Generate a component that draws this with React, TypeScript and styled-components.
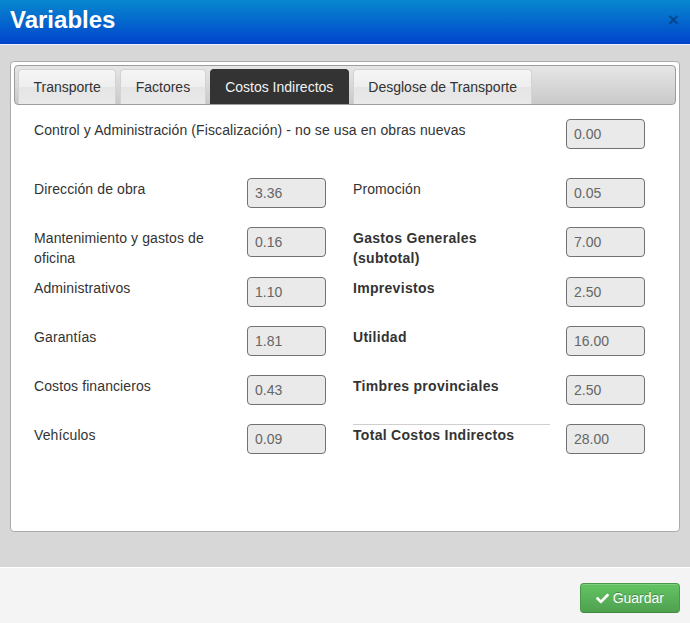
import React from 'react'
import styled, { createGlobalStyle } from 'styled-components'
import { FaCheck } from 'react-icons/fa'

const GlobalStyle = createGlobalStyle`
    html, body {
        margin: 0;
        padding: 0;
    }

    body {
        font-family: "Liberation Sans", Arial, sans-serif;
        font-size: 14px;
        color: #333;
        background: #fff;
    }

    * {
        box-sizing: border-box;
    }
`

const Modal = styled.div`
    display: flex;
    flex-direction: column;
    width: 690px;
    height: 623px;
    overflow: hidden;
`

const Header = styled.header`
    height: 45px;
    display: flex;
    align-items: center;
    justify-content: space-between;
    padding: 0 11px 4px 10px;
    background: linear-gradient(#0888cf, #0044cc);
    border-bottom: 1px solid #eef3fa;
`

const Title = styled.h3`
    margin: 0;
    font-size: 24px;
    line-height: 24px;
    font-weight: bold;
    color: #fff;
`

const Close = styled.button`
    border: 0;
    padding: 0;
    background: none;
    font-family: "Liberation Sans", Arial, sans-serif;
    font-size: 19px;
    font-weight: bold;
    line-height: 20px;
    color: #000;
    opacity: 0.3;
    cursor: pointer;
`

const Body = styled.div`
    flex: 1;
    display: flex;
    flex-direction: column;
    padding: 16px 10px 35px;
    background: #d7d7d7;
`

const Panel = styled.div`
    flex: 1;
    display: flex;
    flex-direction: column;
    padding: 3px;
    background: #fff;
    border: 1px solid #ababab;
    border-radius: 4px;
`

const TabBar = styled.ul`
    display: flex;
    gap: 4px;
    margin: 0;
    padding: 3px 3px 0;
    list-style: none;
    border: 1px solid #9d9d9d;
    border-radius: 4px;
    background: linear-gradient(#e6e6e6, #c9c9c9);
`

const Tab = styled.li<{ $active?: boolean }>`
    padding: 7px 14.5px;
    line-height: 20px;
    font-size: 14px;
    border: 1px solid ${p => (p.$active ? '#333' : '#d3d3d3')};
    border-bottom: 0;
    border-radius: 4px 4px 0 0;
    color: ${p => (p.$active ? '#f2f2f2' : '#333')};
    background: ${p =>
        p.$active
            ? '#333'
            : 'linear-gradient(#f5f5f5 0%, #eeeeee 50%, #e5e5e5 51%, #e9e9e9 100%)'};
    cursor: pointer;
`

const Content = styled.div`
    padding: 14px 20px 0;
`

const Wide = styled.div`
    display: grid;
    grid-template-columns: 1fr 79px;
    width: 611px;
    height: 59px;
`

const Columns = styled.div`
    display: grid;
    grid-template-columns: 292px 292px;
    column-gap: 27px;
`

const Column = styled.div`
    display: flex;
    flex-direction: column;
`

const Field = styled.div`
    display: grid;
    grid-template-columns: 213px 79px;
    align-items: start;
    height: 49.3px;
`

const Label = styled.label<{ $bold?: boolean; $ruled?: boolean; $wide?: boolean }>`
    width: ${p => (p.$wide ? 'auto' : p.$ruled ? '197px' : '190px')};
    padding-top: ${p => (p.$ruled ? '0' : '1px')};
    line-height: 20px;
    font-size: 14px;
    font-weight: ${p => (p.$bold ? 'bold' : 'normal')};
    letter-spacing: ${p => (p.$bold ? '0.3px' : '0.1px')};
    color: #333;
    border-top: ${p => (p.$ruled ? '1px solid #cfcfcf' : '0')};
`

const Value = styled.input`
    width: 79px;
    height: 30px;
    padding: 0 6px 0 7px;
    font-family: "Liberation Sans", Arial, sans-serif;
    font-size: 14px;
    color: #666;
    background: #eaeaea;
    border: 1px solid #727272;
    border-radius: 4px;
    outline: none;
`

const Footer = styled.footer`
    height: 56px;
    display: flex;
    justify-content: flex-end;
    align-items: flex-start;
    padding: 15px 10px 0;
    background: #f4f4f4;
    border-top: 1px solid #fff;
`

const SaveButton = styled.button`
    height: 30px;
    display: flex;
    align-items: center;
    gap: 4px;
    padding: 0 15px;
    font-family: "Liberation Sans", Arial, sans-serif;
    font-size: 14px;
    color: #fff;
    text-shadow: 0 -1px 0 rgba(0, 0, 0, 0.25);
    background: linear-gradient(#63c463, #4fa14f);
    border: 1px solid #4a994a;
    border-bottom-color: #3f8a3f;
    border-radius: 4px;
    box-shadow: inset 0 1px 0 rgba(255, 255, 255, 0.2);
    cursor: pointer;
`

type Row = { label: string; value: string; bold?: boolean; ruled?: boolean }

const left: Row[] = [
    { label: 'Dirección de obra', value: '3.36' },
    { label: 'Mantenimiento y gastos de oficina', value: '0.16' },
    { label: 'Administrativos', value: '1.10' },
    { label: 'Garantías', value: '1.81' },
    { label: 'Costos financieros', value: '0.43' },
    { label: 'Vehículos', value: '0.09' },
]

const right: Row[] = [
    { label: 'Promoción', value: '0.05' },
    { label: 'Gastos Generales (subtotal)', value: '7.00', bold: true },
    { label: 'Imprevistos', value: '2.50', bold: true },
    { label: 'Utilidad', value: '16.00', bold: true },
    { label: 'Timbres provinciales', value: '2.50', bold: true },
    { label: 'Total Costos Indirectos', value: '28.00', bold: true, ruled: true },
]

const tabs = ['Transporte', 'Factores', 'Costos Indirectos', 'Desglose de Transporte']

const FieldColumn = ({ rows }: { rows: Row[] }) => (
    <Column>
        {rows.map(r => (
            <Field key={r.label}>
                <Label $bold={r.bold} $ruled={r.ruled}>{r.label}</Label>
                <Value readOnly value={r.value} />
            </Field>
        ))}
    </Column>
)

const App = () => {
    return (
        <Modal>
            <GlobalStyle />
            <Header>
                <Title>Variables</Title>
                <Close>×</Close>
            </Header>

            <Body>
                <Panel>
                    <TabBar>
                        {tabs.map(t => (
                            <Tab key={t} $active={t === 'Costos Indirectos'}>
                                {t}
                            </Tab>
                        ))}
                    </TabBar>

                    <Content>
                        <Wide>
                            <Label $wide>
                                Control y Administración (Fiscalización) - no se usa en obras nuevas
                            </Label>
                            <Value readOnly value="0.00" />
                        </Wide>

                        <Columns>
                            <FieldColumn rows={left} />
                            <FieldColumn rows={right} />
                        </Columns>
                    </Content>
                </Panel>
            </Body>

            <Footer>
                <SaveButton>
                    <FaCheck size={13} />
                    Guardar
                </SaveButton>
            </Footer>
        </Modal>
    )
}

export default App
